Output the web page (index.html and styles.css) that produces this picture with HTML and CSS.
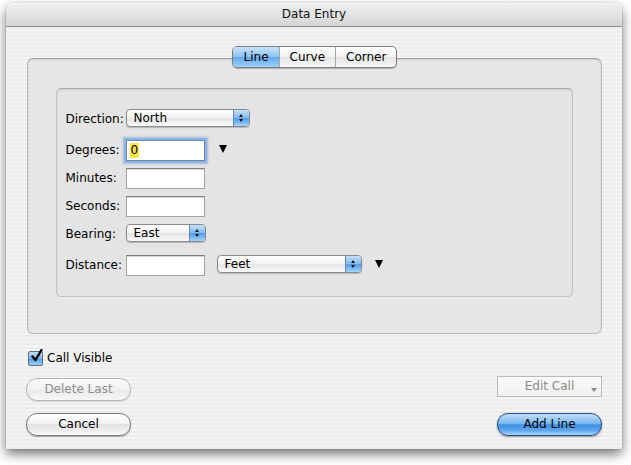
FILE: index.html
```html
<!DOCTYPE html>
<html>
<head>
<meta charset="utf-8">
<title>Data Entry</title>
<link rel="stylesheet" href="styles.css">
</head>
<body>
<div class="window">
  <div class="titlebar">Data Entry</div>
  <div class="content">
    <div class="tabwrap">
      <div class="tabs">
        <span class="tab sel">Line</span>
        <span class="tab">Curve</span>
        <span class="tab">Corner</span>
      </div>
      <div class="groupbox">
        <div class="innerbox">
          <div class="row r1">
            <span class="label">Direction:</span>
            <span class="popup w-north"><span class="ptext">North</span><span class="parrows"><i class="up"></i><i class="dn"></i></span></span>
          </div>
          <div class="row r2">
            <span class="label">Degrees:</span>
            <span class="field focus"><span class="sel-text">0</span></span>
            <span class="disc d1"></span>
          </div>
          <div class="row r3">
            <span class="label">Minutes:</span>
            <span class="field"></span>
          </div>
          <div class="row r3">
            <span class="label">Seconds:</span>
            <span class="field"></span>
          </div>
          <div class="row r3">
            <span class="label">Bearing:</span>
            <span class="popup w-east"><span class="ptext">East</span><span class="parrows"><i class="up"></i><i class="dn"></i></span></span>
          </div>
          <div class="row r2">
            <span class="label">Distance:</span>
            <span class="field"></span>
            <span class="popup w-feet"><span class="ptext">Feet</span><span class="parrows"><i class="up"></i><i class="dn"></i></span></span>
            <span class="disc d2"></span>
          </div>
        </div>
      </div>
    </div>
    <div class="bottom">
      <label class="check"><span class="cbox"><svg width="13" height="14" viewBox="0 0 13 14"><path d="M2.5 7.5 L5.5 11 L11.5 1" fill="none" stroke="#000" stroke-width="2.4" stroke-linecap="round" stroke-linejoin="round"/></svg></span>Call Visible</label>
      <div class="brow b1">
        <span class="btn disabled">Delete Last</span>
        <span class="bevel">Edit Call<i class="mini"></i></span>
      </div>
      <div class="brow b2">
        <span class="btn">Cancel</span>
        <span class="btn default">Add Line</span>
      </div>
    </div>
  </div>
</div>
</body>
</html>
```
FILE: styles.css
```css
html, body {
  margin: 0;
  padding: 0;
  background: #ffffff;
  width: 631px;
  height: 465px;
  overflow: hidden;
  font-family: "DejaVu Sans", "Liberation Sans", sans-serif;
  font-size: 12px;
  color: #000;
}
.window {
  margin: 3px 0 0 6px;
  width: 616px;
  height: 446px;
  border-radius: 7px 7px 0 0;
  background: repeating-linear-gradient(#ececec 0 2px, #f4f4f4 2px 4px);
  box-shadow: 0 5px 12px rgba(0,0,0,0.55), 0 0 1px rgba(0,0,0,0.5);
  display: flex;
  flex-direction: column;
}
.titlebar {
  height: 23px;
  line-height: 23px;
  text-align: center;
  font-size: 12px;
  color: #111;
  border-radius: 7px 7px 0 0;
  background: linear-gradient(#efefef, #e0e0e0 60%, #d4d4d4);
  border-bottom: 1px solid #8e8e8e;
  box-shadow: inset 0 1px 0 #fafafa;
}
.content {
  padding: 19px 20px 0 20px;
  flex: 1;
}
.tabwrap {
  display: flex;
  flex-direction: column;
  align-items: center;
}
.tabs {
  display: flex;
  height: 20px;
  border: 1px solid #7d7d7d;
  border-radius: 5px;
  background: linear-gradient(#ffffff, #f1f1f1 50%, #e4e4e4 51%, #f7f7f7);
  margin-bottom: -10px;
  position: relative;
  z-index: 2;
  margin-left: 1px;
  box-shadow: 0 1px 1px rgba(0,0,0,0.25);
  overflow: hidden;
}
.tab {
  line-height: 20px;
  padding: 0 10px;
  border-left: 1px solid #a6a6a6;
}
.tab:first-child { border-left: none; }
.tab.sel {
  padding: 0 10px 0 11px;
  background: linear-gradient(#c7e2fa, #8fc3f3 50%, #62a7ee 51%, #9ed2fb);
}
.groupbox {
  width: 575px;
  height: 276px;
  box-sizing: border-box;
  border: 1px solid #b9b9b9;
  border-top-color: #9f9f9f;
  border-radius: 6px;
  background: #e7e7e7;
  box-shadow: inset 0 1px 2px rgba(0,0,0,0.12);
  padding: 29px 28px 0 28px;
  display: flex;
  align-items: flex-start;
}
.innerbox {
  flex: 1;
  height: 209px;
  box-sizing: border-box;
  border: 1px solid #c2c2c2;
  border-top-color: #a9a9a9;
  border-radius: 5px;
  background: #e4e4e4;
  box-shadow: inset 0 1px 2px rgba(0,0,0,0.1);
  padding: 19px 0 0 9px;
}
.row {
  display: flex;
  align-items: center;
  height: 22px;
  position: relative;
}
.r1 { margin-top: 0; }
.r2 { margin-top: 9px; }
.r3 { margin-top: 6px; }
.label {
  width: 60px;
}
.field {
  width: 79px;
  height: 21px;
  box-sizing: border-box;
  background: #fff;
  border: 1px solid #a3a3a3;
  border-top-color: #7c7c7c;
  box-shadow: inset 0 1px 0 #d6d6d6;
  display: flex;
  align-items: center;
  padding-left: 3px;
}
.field.focus {
  box-shadow: 0 0 0 2px #8db2e3, 0 0 2px 3px rgba(120,160,220,0.6);
  border-color: #6f87ad;
}
.sel-text {
  background: #fde34a;
  padding: 0 1px;
  line-height: 15px;
}
.popup {
  height: 18px;
  box-sizing: border-box;
  border: 1px solid #8a8a8a;
  border-radius: 4px;
  background: linear-gradient(#ffffff, #f2f2f2 50%, #e4e4e4 51%, #fafafa);
  display: flex;
  align-items: stretch;
  overflow: hidden;
  box-shadow: 0 1px 1px rgba(0,0,0,0.2);
}
.ptext {
  flex: 1;
  padding-left: 7px;
  line-height: 16px;
}
.parrows {
  width: 15px;
  background: linear-gradient(#c4e0fa, #7fb9f0 50%, #4f9ae8 51%, #a0d3fb);
  border-left: 1px solid #6b87ad;
  display: flex;
  flex-direction: column;
  align-items: center;
  justify-content: center;
  gap: 2px;
}
.parrows i {
  width: 0;
  height: 0;
  border-left: 2.5px solid transparent;
  border-right: 2.5px solid transparent;
}
.parrows .up { border-bottom: 3px solid #111; }
.parrows .dn { border-top: 3px solid #111; }
.w-north { width: 124px; margin-top: -2px; }
.w-east { width: 80px; margin-top: -2px; }
.w-feet { width: 145px; margin-left: 12px; margin-top: -2px; }
.disc {
  width: 0;
  height: 0;
  border-left: 4.5px solid transparent;
  border-right: 4.5px solid transparent;
  border-top: 8px solid #000;
}
.d1 { margin-left: 14px; margin-top: -3px; }
.d2 { margin-left: 13px; margin-top: -3px; }
.bottom {
  padding-top: 16px;
  display: flex;
  flex-direction: column;
}
.check {
  display: flex;
  align-items: center;
  height: 16px;
  padding-left: 2px;
}
.cbox {
  width: 13px;
  height: 13px;
  border: 1px solid #5a6f90;
  border-radius: 2px;
  background: linear-gradient(#c3dffa, #7db7ef 50%, #4f99e8 51%, #9dd0fa);
  margin-right: 4px;
  position: relative;
}
.cbox svg {
  position: absolute;
  left: 1px;
  top: -3px;
}
.brow {
  display: flex;
  justify-content: space-between;
  align-items: flex-end;
}
.b1 { margin-top: 11px; height: 24px; }
.b2 { margin-top: 12px; }
.btn {
  width: 105px;
  height: 23px;
  box-sizing: border-box;
  border: 1px solid #7a7a7a;
  border-radius: 11px;
  background: linear-gradient(#ffffff, #f3f3f3 45%, #e2e2e2 50%, #f0f0f0 85%, #ffffff);
  text-align: center;
  line-height: 21px;
  box-shadow: 0 1px 1px rgba(0,0,0,0.3);
}
.btn.disabled {
  color: #8e8e8e;
  border-color: #b5b5b5;
  background: linear-gradient(#fbfbfb, #f1f1f1 50%, #e9e9e9 51%, #f6f6f6);
  box-shadow: 0 1px 1px rgba(0,0,0,0.12);
}
.btn.default {
  border-color: #2e4a86;
  background: linear-gradient(#c3e0fb, #7ab7f0 45%, #3f8ee6 52%, #62aaf0 80%, #a7d8fd);
  box-shadow: 0 1px 2px rgba(0,0,0,0.4);
}
.bevel {
  width: 105px;
  height: 21px;
  box-sizing: border-box;
  border: 1px solid #b9b9b9;
  background: linear-gradient(#fafafa, #f1f1f1);
  color: #8a8a8a;
  text-align: center;
  line-height: 19px;
  position: relative;
  margin-bottom: 4px;
}
.mini {
  position: absolute;
  right: 4px;
  bottom: 4px;
  width: 0;
  height: 0;
  border-left: 3px solid transparent;
  border-right: 3px solid transparent;
  border-top: 4px solid #8a8a8a;
}
```
